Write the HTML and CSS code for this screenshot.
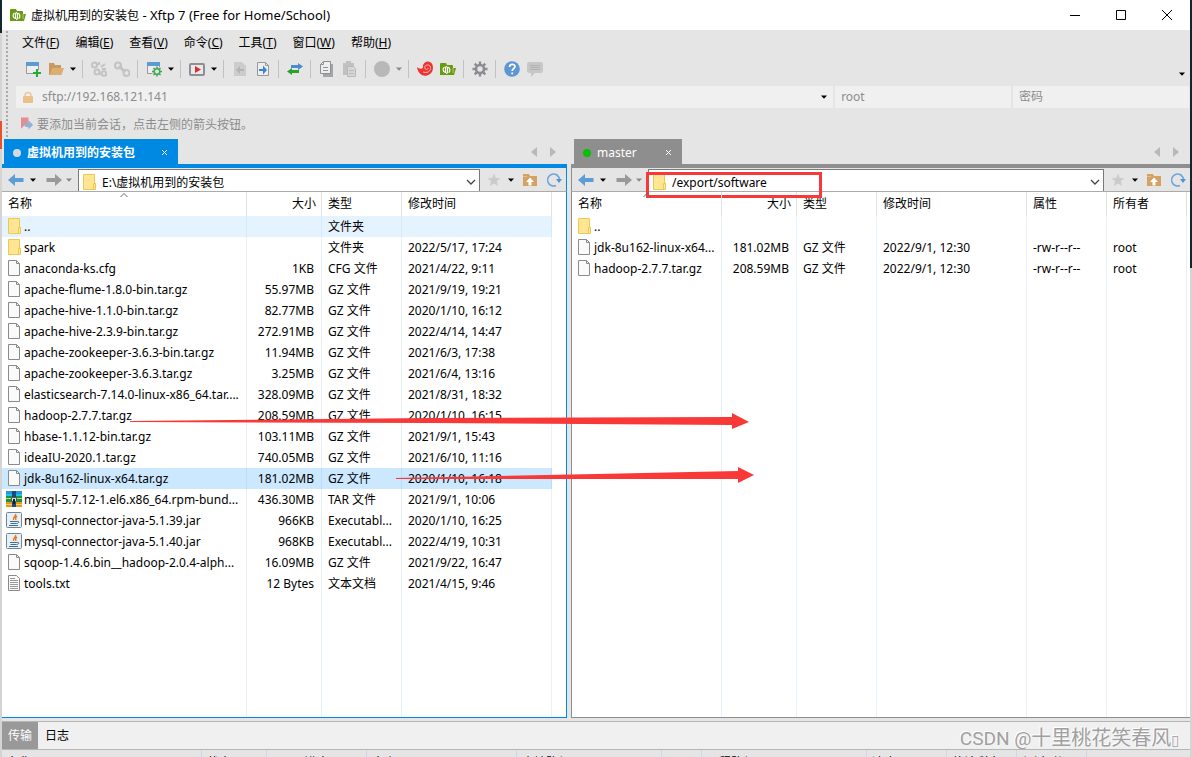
FILE: index.html
```html
<!DOCTYPE html>
<html lang="zh-CN">
<head>
  <meta charset="UTF-8" />
  <meta name="viewport" content="width=device-width, initial-scale=1.0" />
  <title>虚拟机用到的安装包 - Xftp 7 (Free for Home/School)</title>
  <link rel="stylesheet" href="styles.css">
</head>
<body>
  <!-- shared icons -->
  <svg class="sprite" aria-hidden="true">
    <symbol id="i-logo" viewBox="0 0 16 16">
      <path d="M0 3q0-1 1-1h5l1 2h5q1 0 1 1v2h3l-2 7H0z" fill="#6a9a12"/>
      <path d="M13 7v5" stroke="#e5e5e5" stroke-width=".6"/>
      <path d="M5.500 12V7.500q0-2 1.500-2M5.500 11.500C2.500 11 2.500 7 4.500 6M7.500 6v4.500q0 2-1.500 2M7.500 6c3 .5 3 4.500 1 5.500" fill="none" stroke="#fff" stroke-width="1.200"/>
    </symbol>
    <symbol id="i-dir" viewBox="0 0 14 18">
      <path d="M.5 1.500h11v9h1v6H.5z" fill="#ffe594" stroke="#ecc94f"/>
      <path d="M10.500 16v-5.500h2" fill="none" stroke="#ecc94f"/>
    </symbol>
    <symbol id="i-file" viewBox="0 0 14 18">
      <path d="M.5 1.500h8l3 3v12H.5z" fill="#fafafa" stroke="#8a8a8a"/>
      <path d="M8.500 1.500v3h3" fill="none" stroke="#8a8a8a"/>
    </symbol>
    <symbol id="i-txt" viewBox="0 0 14 18">
      <path d="M.5 1.500h8l3 3v12H.5z" fill="#fafafa" stroke="#8a8a8a"/>
      <path d="M2 4.500h5M2 6.500h8M2 8.500h8M2 10.500h8M2 12.500h8M2 14.500h8" stroke="#999"/>
    </symbol>
    <symbol id="i-rar" viewBox="0 0 16 16">
      <path d="M0 0h16v5H0z" fill="#2b93df"/><path d="M0 3h16v2H0z" fill="#1fc4e0"/>
      <path d="M0 5h16v6H0z" fill="#1f9147"/><path d="M0 7h16v1H0z" fill="#b8e35d"/>
      <path d="M0 11h16v5H0z" fill="#e09a20"/><path d="M0 13h16v1H0z" fill="#f6cf61"/>
      <path d="M6 0h4v16H6z" fill="#174d7e"/><path d="M5.500 6.500h5v4h-5z" fill="#ddd" stroke="#555"/><path d="M7 8h2v5H7z" fill="#123"/>
    </symbol>
    <symbol id="i-jar" viewBox="0 0 16 16">
      <rect x=".5" y=".5" width="15" height="15" rx="1" fill="#e9f0f5" stroke="#6e8798"/>
      <path d="M9.500 2c1 2-3 3-2 6M11 4c-2 1-2 2-1 4" fill="none" stroke="#e97623" stroke-width="1.400"/>
      <path d="M4 9.500h7M4.500 11.500h6M3 13.500h9M11 9.500c3-.5 2 2-.5 2" fill="none" stroke="#3f718f"/>
    </symbol>
    <symbol id="i-left" viewBox="0 0 16 14"><path d="M0 7l7-6v4h8.500v4H7v4z"/></symbol>
    <symbol id="i-right" viewBox="0 0 16 14"><path d="M16 7L9 1v4H.5v4H9v4z"/></symbol>
    <symbol id="i-tri" viewBox="0 0 6 4"><path d="M0 .5h6L3 3.800z"/></symbol>
    <symbol id="i-prev" viewBox="0 0 6 10"><path d="M6 0v10L0 5z"/></symbol>
    <symbol id="i-next" viewBox="0 0 6 10"><path d="M0 0v10l6-5z"/></symbol>
    <symbol id="i-x" viewBox="0 0 7 7"><path d="M1 1l5 5M6 1L1 6" fill="none" stroke="#fff"/></symbol>
    <symbol id="i-down" viewBox="0 0 10 6"><path d="M1 1l4 4 4-4" fill="none" stroke="#444" stroke-width="1.300"/></symbol>
    <symbol id="i-star" viewBox="0 0 14 14"><path d="M7 .5l1.800 4.500 4.700.3-3.600 3 1.200 4.700L7 10.500 2.900 13l1.200-4.700-3.600-3L5.200 5z" fill="#cbcbcb"/></symbol>
    <symbol id="i-up" viewBox="0 0 16 16">
      <path d="M1 2h6l1 2h7v10H1z" fill="#d5a265"/><path d="M1 4h4v1H1z" fill="#e7bd87"/>
      <path d="M8 5.500l4 4.500H9.500v3.500h-3V10H4z" fill="#fff"/>
    </symbol>
    <symbol id="i-refresh" viewBox="0 0 16 16">
      <path d="M10 13.500A6 6 0 1 1 13.500 7" fill="none" stroke="#6ba6da" stroke-width="1.600"/>
      <path d="M10 7h6l-3 4z" fill="#4f95d2"/>
    </symbol>
    <symbol id="i-gear" viewBox="0 0 16 16">
      <path d="M8 .5v15M.5 8h15M2.700 2.700l10.600 10.600M13.300 2.700L2.700 13.300" stroke="currentColor" stroke-width="2.400"/>
      <circle cx="8" cy="8" r="4" fill="#e5e5e5" stroke="currentColor" stroke-width="2.600"/>
    </symbol>
  </svg>

  <div class="window">
    <header class="titlebar">
      <svg class="logo"><use href="#i-logo"/></svg>
      <h1>虚拟机用到的安装包<span> - Xftp 7 (Free for Home/School)</span></h1>
      <div class="winbtns">
        <button aria-label="最小化"><svg viewBox="0 0 10 10"><path d="M0 5.500h10"/></svg></button>
        <button aria-label="最大化"><svg viewBox="0 0 10 10"><path d="M.5.5h9v9h-9z"/></svg></button>
        <button aria-label="关闭"><svg viewBox="0 0 10 10"><path d="M0 0l10 10M10 0L0 10"/></svg></button>
      </div>
    </header>

    <div class="bars">
      <nav class="menu">
        <button>文件(<u>F</u>)</button>
        <button>编辑(<u>E</u>)</button>
        <button>查看(<u>V</u>)</button>
        <button>命令(<u>C</u>)</button>
        <button>工具(<u>T</u>)</button>
        <button>窗口(<u>W</u>)</button>
        <button>帮助(<u>H</u>)</button>
      </nav>

      <div class="toolbar">
        <button class="tool" aria-label="新建"><svg viewBox="0 0 16 16"><path d="M1.500 2.500h12v10h-12z" fill="#eee" stroke="#999"/><path d="M1 1h13v4H1z" fill="#5b9bd5"/><path d="M8 9h8v7H8z" fill="#e5e5e5"/><path d="M12 8v8M8 12h8" stroke="#22ac38" stroke-width="2"/></svg></button>
        <button class="tool" aria-label="打开"><svg viewBox="0 0 16 16"><path d="M1 2h5l1 2h6v3H5l-3 7H1z" fill="#c99a5f"/><path d="M4.500 7H16l-2.500 7H1.500z" fill="#dcae72"/></svg></button>
        <button class="drop" aria-label="打开列表"><svg><use href="#i-tri"/></svg></button>
        <i class="sep"></i>
        <button class="tool" aria-label="断开"><svg viewBox="0 0 16 16" fill="none" stroke="#c3c3c3" stroke-width="2"><circle cx="3.500" cy="4" r="2.500"/><circle cx="6" cy="11" r="2.500"/><circle cx="13" cy="12.500" r="2.300"/><path d="M8 1v3M10 6l4-3M11 8h4M8 13l3-1"/></svg></button>
        <button class="tool" aria-label="重新连接"><svg viewBox="0 0 16 16" fill="none" stroke="#c3c3c3" stroke-width="2"><circle cx="4" cy="4.500" r="3"/><circle cx="12.500" cy="12" r="3"/><path d="M5 5l6 6" stroke-width="3"/></svg></button>
        <i class="sep"></i>
        <button class="tool" aria-label="会话属性"><svg viewBox="0 0 16 16"><path d="M1.500 2.500h12v10h-12z" fill="#eee" stroke="#999"/><path d="M1 1h13v4H1z" fill="#5b9bd5"/><circle cx="11" cy="10.500" r="5" fill="#e5e5e5"/><g stroke="#43a854" stroke-width="1.600"><path d="M11 5.500v10M6 10.500h10M7.500 7l7 7M14.500 7l-7 7"/><circle cx="11" cy="10.500" r="2.800" fill="#e5e5e5"/></g></svg></button>
        <button class="drop" aria-label="属性列表"><svg><use href="#i-tri"/></svg></button>
        <i class="sep"></i>
        <button class="tool" aria-label="运行"><svg viewBox="0 0 16 16"><rect x="1" y="3" width="14" height="11" rx="1" fill="#e9e9e9" stroke="#8c8f96" stroke-width="2"/><path d="M6 5l6 3.500L6 12z" fill="#dd2c2c"/></svg></button>
        <button class="drop" aria-label="运行列表"><svg><use href="#i-tri"/></svg></button>
        <i class="sep"></i>
        <button class="tool" aria-label="传入"><svg viewBox="0 0 16 16"><path d="M2 1h8l4 4v10H2z" fill="#ccc"/><path d="M4 9l4-4v3h4v2H8v3z" fill="#b4b4b4"/></svg></button>
        <button class="tool" aria-label="传出"><svg viewBox="0 0 16 16"><path d="M2.500 1.500h8l3 3v10h-11z" fill="#eee" stroke="#999"/><path d="M10.500 1.500v3h3" fill="none" stroke="#999"/><path d="M12 9L8 4.500V8H4v2h4v3.500z" fill="#3d83cf"/></svg></button>
        <i class="sep"></i>
        <button class="tool" aria-label="同步"><svg viewBox="0 0 16 16"><path d="M4 4h7V2l5 3.500L11 9V7H4z" fill="#4c8bcf"/><path d="M12 9H5V7L0 10.500 5 14v-2h7z" fill="#27a22d"/></svg></button>
        <i class="sep"></i>
        <button class="tool" aria-label="复制"><svg viewBox="0 0 16 16"><path d="M4 3h10v13H4z" fill="#a2a5aa"/><path d="M4.500.5h7v12h-10v-9z" fill="#eee" stroke="#8c8f94"/><path d="M1.500 3.500h3v-3M4 6.500h5M4 9.500h5" fill="none" stroke="#909397"/></svg></button>
        <button class="tool" aria-label="粘贴"><svg viewBox="0 0 16 16"><path d="M1 2h11v12H1zM4 0h5v3H4z" fill="#c1c1c1"/><path d="M5.500 5.500h6l2 2v8h-8z" fill="#d6d6d6" stroke="#b9b9b9"/><path d="M7 9.500h5M7 12.500h5" stroke="#b9b9b9"/></svg></button>
        <i class="sep"></i>
        <button class="tool" aria-label="停止"><svg viewBox="0 0 16 16"><circle cx="8" cy="8" r="8" fill="#b8b8b8"/></svg></button>
        <button class="drop dim" aria-label="停止列表"><svg><use href="#i-tri"/></svg></button>
        <i class="sep"></i>
        <button class="tool" aria-label="Xshell"><svg viewBox="0 0 16 16"><path d="M0 6c2 2 4 2 6 1C5 3 9-1 13 1c4 2 4 9 0 12-5 4-12 1-13-7z" fill="#ee3430"/><path d="M6 11c6 2 9-3 7-6-2-2-6-1-5 2 0 2 3 2 3 0" fill="none" stroke="#f6bcb9"/></svg></button>
        <button class="tool" aria-label="Xftp"><svg><use href="#i-logo"/></svg></button>
        <i class="sep"></i>
        <button class="tool gear" aria-label="选项"><svg><use href="#i-gear"/></svg></button>
        <i class="sep"></i>
        <button class="tool" aria-label="帮助"><svg viewBox="0 0 16 16"><circle cx="8" cy="8" r="7.800" fill="#5c97d3"/><path d="M5.500 6c0-3.500 5.500-3.500 5.500-.5C11 7.500 8.200 7.500 8.200 10M8.200 11.500v1.700" fill="none" stroke="#fff" stroke-width="1.700"/></svg></button>
        <button class="tool" aria-label="反馈"><svg viewBox="0 0 16 16"><path d="M2 1h12q2 0 2 2v7q0 2-2 2H8l-4 4v-4H2q-2 0-2-2V3q0-2 2-2z" fill="#c7c7c7"/><path d="M3 4.500h10M3 6.500h10M3 8.500h10" stroke="#b2b2b2"/></svg></button>
        <button class="drop last" aria-label="更多"><svg><use href="#i-tri"/></svg></button>
      </div>

      <form class="address">
        <div class="field host">
          <svg viewBox="0 0 10 11"><path d="M2 5V3.500q0-3 3-3t3 3V5" fill="none" stroke="#ecc999" stroke-width="1.600"/><rect y="4" width="10" height="7" rx="1" fill="#ebc18a"/></svg>
          <input type="text" aria-label="主机" value="sftp://192.168.121.141">
          <button type="button" class="drop" aria-label="主机列表"><svg><use href="#i-tri"/></svg></button>
        </div>
        <div class="field user"><input type="text" aria-label="用户名" placeholder="root"></div>
        <div class="field pass"><input type="password" aria-label="密码" placeholder="密码"></div>
      </form>

      <div class="session">
        <svg viewBox="0 0 14 14"><path d="M0 0h8v11L4 8l-4 4z" fill="#e58d91"/><path d="M13 8L8 3v3H4v4h4v3z" fill="#90b2da"/></svg>
        <span>要添加当前会话，点击左侧的箭头按钮。</span>
      </div>
    </div>

    <main class="panes">
      <section class="pane local">
        <div class="tabs">
          <div class="tab"><i class="dot"></i><span>虚拟机用到的安装包</span><button aria-label="关闭标签"><svg><use href="#i-x"/></svg></button></div>
          <div class="tabnav"><svg><use href="#i-prev"/></svg><svg><use href="#i-next"/></svg></div>
        </div>
        <div class="pathbar">
          <div class="history">
            <button class="nav" aria-label="后退"><svg><use href="#i-left"/></svg></button>
            <button class="drop" aria-label="后退列表"><svg><use href="#i-tri"/></svg></button>
            <button class="nav off" aria-label="前进"><svg><use href="#i-right"/></svg></button>
            <button class="drop dim" aria-label="前进列表"><svg><use href="#i-tri"/></svg></button>
          </div>
          <div class="path">
            <svg class="ficon"><use href="#i-dir"/></svg>
            <input type="text" aria-label="本地路径" value="E:\虚拟机用到的安装包">
            <button aria-label="展开路径"><svg><use href="#i-down"/></svg></button>
          </div>
          <div class="extras">
            <button class="star" aria-label="收藏"><svg><use href="#i-star"/></svg></button>
            <button class="drop" aria-label="收藏列表"><svg><use href="#i-tri"/></svg></button>
            <button aria-label="上级目录"><svg><use href="#i-up"/></svg></button>
            <button aria-label="刷新"><svg><use href="#i-refresh"/></svg></button>
          </div>
        </div>
        <div class="list">
          <table>
            <colgroup><col class="c-name"><col class="c-size"><col class="c-type"><col class="c-date"></colgroup>
            <thead>
              <tr><th class="sorted">名称<svg viewBox="0 0 8 4"><path d="M.5 4L4 .5 7.500 4" fill="none" stroke="#666"/></svg></th><th class="num">大小</th><th>类型</th><th>修改时间</th></tr>
            </thead>
            <tbody>
              <tr class="hover"><td><svg class="ficon"><use href="#i-dir"/></svg>..</td><td class="num"></td><td>文件夹</td><td></td></tr>
              <tr><td><svg class="ficon"><use href="#i-dir"/></svg>spark</td><td class="num"></td><td>文件夹</td><td>2022/5/17, 17:24</td></tr>
              <tr><td><svg class="ficon"><use href="#i-file"/></svg>anaconda-ks.cfg</td><td class="num">1KB</td><td>CFG 文件</td><td>2021/4/22, 9:11</td></tr>
              <tr><td><svg class="ficon"><use href="#i-file"/></svg>apache-flume-1.8.0-bin.tar.gz</td><td class="num">55.97MB</td><td>GZ 文件</td><td>2021/9/19, 19:21</td></tr>
              <tr><td><svg class="ficon"><use href="#i-file"/></svg>apache-hive-1.1.0-bin.tar.gz</td><td class="num">82.77MB</td><td>GZ 文件</td><td>2020/1/10, 16:12</td></tr>
              <tr><td><svg class="ficon"><use href="#i-file"/></svg>apache-hive-2.3.9-bin.tar.gz</td><td class="num">272.91MB</td><td>GZ 文件</td><td>2022/4/14, 14:47</td></tr>
              <tr><td><svg class="ficon"><use href="#i-file"/></svg>apache-zookeeper-3.6.3-bin.tar.gz</td><td class="num">11.94MB</td><td>GZ 文件</td><td>2021/6/3, 17:38</td></tr>
              <tr><td><svg class="ficon"><use href="#i-file"/></svg>apache-zookeeper-3.6.3.tar.gz</td><td class="num">3.25MB</td><td>GZ 文件</td><td>2021/6/4, 13:16</td></tr>
              <tr><td><svg class="ficon"><use href="#i-file"/></svg>elasticsearch-7.14.0-linux-x86_64.tar....</td><td class="num">328.09MB</td><td>GZ 文件</td><td>2021/8/31, 18:32</td></tr>
              <tr><td><svg class="ficon"><use href="#i-file"/></svg>hadoop-2.7.7.tar.gz</td><td class="num">208.59MB</td><td>GZ 文件</td><td>2020/1/10, 16:15</td></tr>
              <tr><td><svg class="ficon"><use href="#i-file"/></svg>hbase-1.1.12-bin.tar.gz</td><td class="num">103.11MB</td><td>GZ 文件</td><td>2021/9/1, 15:43</td></tr>
              <tr><td><svg class="ficon"><use href="#i-file"/></svg>ideaIU-2020.1.tar.gz</td><td class="num">740.05MB</td><td>GZ 文件</td><td>2021/6/10, 11:16</td></tr>
              <tr class="selected"><td><svg class="ficon"><use href="#i-file"/></svg>jdk-8u162-linux-x64.tar.gz</td><td class="num">181.02MB</td><td>GZ 文件</td><td>2020/1/10, 16:18</td></tr>
              <tr><td><svg class="ficon wide"><use href="#i-rar"/></svg>mysql-5.7.12-1.el6.x86_64.rpm-bund...</td><td class="num">436.30MB</td><td>TAR 文件</td><td>2021/9/1, 10:06</td></tr>
              <tr><td><svg class="ficon wide"><use href="#i-jar"/></svg>mysql-connector-java-5.1.39.jar</td><td class="num">966KB</td><td>Executabl...</td><td>2020/1/10, 16:25</td></tr>
              <tr><td><svg class="ficon wide"><use href="#i-jar"/></svg>mysql-connector-java-5.1.40.jar</td><td class="num">968KB</td><td>Executabl...</td><td>2022/4/19, 10:31</td></tr>
              <tr><td><svg class="ficon"><use href="#i-file"/></svg>sqoop-1.4.6.bin__hadoop-2.0.4-alph...</td><td class="num">16.09MB</td><td>GZ 文件</td><td>2021/9/22, 16:47</td></tr>
              <tr><td><svg class="ficon"><use href="#i-txt"/></svg>tools.txt</td><td class="num">12 Bytes</td><td>文本文档</td><td>2021/4/15, 9:46</td></tr>
              <tr class="rest"><td></td><td></td><td></td><td></td></tr>
            </tbody>
          </table>
        </div>
      </section>

      <section class="pane remote">
        <div class="tabs">
          <div class="tab"><i class="dot"></i><span>master</span><button aria-label="关闭标签"><svg><use href="#i-x"/></svg></button></div>
          <div class="tabnav"><svg><use href="#i-prev"/></svg><svg><use href="#i-next"/></svg></div>
        </div>
        <div class="pathbar">
          <div class="history">
            <button class="nav" aria-label="后退"><svg><use href="#i-left"/></svg></button>
            <button class="drop" aria-label="后退列表"><svg><use href="#i-tri"/></svg></button>
            <button class="nav off" aria-label="前进"><svg><use href="#i-right"/></svg></button>
            <button class="drop dim" aria-label="前进列表"><svg><use href="#i-tri"/></svg></button>
          </div>
          <div class="path">
            <svg class="ficon"><use href="#i-dir"/></svg>
            <input type="text" aria-label="远程路径" value="/export/software">
            <button aria-label="展开路径"><svg><use href="#i-down"/></svg></button>
            <div class="mark-box"></div>
          </div>
          <div class="extras">
            <button class="star" aria-label="收藏"><svg><use href="#i-star"/></svg></button>
            <button class="drop" aria-label="收藏列表"><svg><use href="#i-tri"/></svg></button>
            <button aria-label="上级目录"><svg><use href="#i-up"/></svg></button>
            <button aria-label="刷新"><svg><use href="#i-refresh"/></svg></button>
          </div>
        </div>
        <div class="list">
          <table>
            <colgroup><col class="c-rname"><col class="c-size"><col class="c-type"><col class="c-date"><col class="c-type"><col class="c-type"></colgroup>
            <thead>
              <tr><th class="sorted">名称<svg viewBox="0 0 8 4"><path d="M.5 4L4 .5 7.500 4" fill="none" stroke="#666"/></svg></th><th class="num">大小</th><th>类型</th><th>修改时间</th><th>属性</th><th>所有者</th></tr>
            </thead>
            <tbody>
              <tr><td><svg class="ficon"><use href="#i-dir"/></svg>..</td><td class="num"></td><td></td><td></td><td></td><td></td></tr>
              <tr><td><svg class="ficon"><use href="#i-file"/></svg>jdk-8u162-linux-x64...</td><td class="num">181.02MB</td><td>GZ 文件</td><td>2022/9/1, 12:30</td><td>-rw-r--r--</td><td>root</td></tr>
              <tr><td><svg class="ficon"><use href="#i-file"/></svg>hadoop-2.7.7.tar.gz</td><td class="num">208.59MB</td><td>GZ 文件</td><td>2022/9/1, 12:30</td><td>-rw-r--r--</td><td>root</td></tr>
              <tr class="rest"><td></td><td></td><td></td><td></td><td></td><td></td></tr>
            </tbody>
          </table>
        </div>
      </section>

      <!-- drag arrows from local to remote -->
      <svg class="arrows" viewBox="0 0 640 80" aria-hidden="true">
        <path d="M0 10L300 7l302-1V2l17 9-17 7v-4L300 12 0 11zM266 67l200-4 142-3v-4l16 8-16 8v-4l-142 0-200 0z"/>
      </svg>
    </main>

    <footer class="bottom">
      <div class="logtabs">
        <button class="on">传输</button>
        <button>日志</button>
        <div class="watermark"><span>CSDN @</span>十里桃花笑春风<small>▯</small></div>
      </div>
      <div class="queue">
        <span class="q-name">名称</span><span class="q-state">状态</span><span class="q-prog">进度</span><span class="q-size">大小</span><span class="q-local">本地路径</span><span class="q-dir">&lt;-&gt;</span><span class="q-remote">远程路径</span><span class="q-speed">速度</span><span class="q-time">估计剩余</span><span class="q-time">经过时间</span>
      </div>
    </footer>
  </div>
</body>
</html>
```
FILE: styles.css
```css
* {
  box-sizing: border-box;
}
:root {
  --bar: #e5e5e5;
  --blue: #0089e3;
  --gray: #8e8e8e;
  --mark: #f93937;
}
body {
  margin: 0;
  height: 100vh;
  overflow: hidden;
  padding: 0 2px;
  font: 12px/16px "Noto Sans", "Noto Sans CJK SC", sans-serif;
  color: #000;
  background:
    linear-gradient(#12262b 268px, #d4d4d4 268px) right / 2px 100% no-repeat,
    linear-gradient(#16262e 33px, #d4d4d4 33px 121px, #e8502e 121px 149px, #d4d4d4 149px) left / 2px 100% no-repeat;
}
button {
  display: flex;
  align-items: center;
  justify-content: center;
  border: 0;
  padding: 0;
  background: none;
  font: inherit;
  color: inherit;
}
input {
  flex: 1;
  min-width: 0;
  border: 0;
  padding: 0;
  background: none;
  font: inherit;
  color: inherit;
  outline: none;
}
svg {
  display: block;
  flex: none;
}
.sprite {
  position: absolute;
  width: 0;
  height: 0;
}
.window {
  display: flex;
  flex-direction: column;
  height: 100%;
  background: var(--bar);
}

/* title */
.titlebar {
  display: flex;
  align-items: center;
  height: 30px;
  padding-left: 8px;
  background: #fff;
}
.logo {
  width: 16px;
  height: 16px;
}
.titlebar h1 {
  flex: 1;
  margin: 0 0 0 5px;
  font-size: 12px;
  font-weight: normal;
}
.titlebar h1 span {
  font-size: 13px;
}
.winbtns {
  display: flex;
}
.winbtns button {
  width: 46px;
  height: 28px;
}
.winbtns svg {
  width: 10px;
  height: 10px;
  fill: none;
  stroke: #000;
}

/* menu + toolbar */
.bars {
  height: 109px;
  padding-left: 14px;
  background: radial-gradient(circle, #aaa 1px, transparent 1px) 3px 0 / 4px 4px repeat-y;
}
.menu {
  display: flex;
  gap: 16px;
  padding: 5px 6px;
}
.menu u {
  text-underline-offset: 1px;
}
.toolbar {
  display: flex;
  align-items: center;
  height: 26px;
  padding: 0 3px 0 5px;
}
.tool {
  width: 23px;
}
.tool svg {
  width: 16px;
  height: 16px;
}
.gear {
  color: #8b8d92;
}
.drop {
  width: 11px;
}
.drop svg {
  width: 6px;
  height: 4px;
}
.dim svg {
  fill: #888;
}
.last {
  margin-left: auto;
  padding-top: 10px;
}
.sep {
  width: 1px;
  height: 18px;
  margin: 0 4px;
  background: #c2c2c2;
}
.address {
  display: flex;
  gap: 2px;
  margin-top: 4px;
  padding-right: 1px;
  color: #8c8c8c;
}
.field {
  display: flex;
  align-items: center;
  height: 22px;
  padding: 0 6px;
  background: #f0f0f0;
}
.field input::placeholder {
  color: #8c8c8c;
  opacity: 1;
}
.host {
  flex: 1;
  gap: 9px;
  padding-right: 4px;
}
.host > svg {
  width: 10px;
  height: 11px;
  margin-left: 1px;
}
.user,
.pass {
  width: 15%;
}
.session {
  display: flex;
  gap: 3px;
  padding: 9px 5px 0;
  color: #8c8c8c;
}
.session svg {
  width: 13px;
  height: 14px;
}

/* panes */
.panes {
  position: relative;
  display: flex;
  flex: 1;
  gap: 4px;
  min-height: 0;
}
.pane {
  display: flex;
  flex-direction: column;
  min-width: 0;
}
.local {
  flex: 565 1 0;
  --pane: var(--blue);
}
.remote {
  flex: 619 1 0;
  --pane: var(--gray);
}
.tabs {
  display: flex;
  align-items: center;
  justify-content: space-between;
  height: 29px;
  padding: 0 11px 0 2px;
  border-bottom: 4px solid var(--pane);
}
.remote .tabs {
  padding-left: 3px;
}
.tab {
  display: flex;
  align-items: center;
  height: 26px;
  padding: 2px 10px 0 9px;
  background: var(--pane);
  color: #fff;
}
.local .tab {
  font-weight: bold;
}
.dot {
  width: 8px;
  height: 8px;
  margin-right: 6px;
  border-radius: 50%;
  background: #d5dade;
}
.remote .dot {
  background: #06c006;
}
.tab button {
  margin-left: 26px;
}
.remote .tab button {
  margin-left: 28px;
}
.tab button svg {
  width: 7px;
  height: 7px;
}
.tabnav {
  display: flex;
  gap: 13px;
}
.tabnav svg {
  width: 6px;
  height: 10px;
  fill: #b8b8b8;
}
.pathbar {
  display: flex;
  height: 24px;
  border-bottom: 1px solid #ababab;
  border-right: 1px solid var(--pane);
}
.remote .pathbar {
  border-right: 0;
  border-left: 1px solid var(--pane);
}
.history {
  display: flex;
  align-items: center;
  width: 76px;
  padding-left: 6px;
}
.nav svg {
  width: 16px;
  height: 14px;
  fill: #5d9dd5;
}
.off svg {
  fill: #999;
}
.history .drop {
  width: 18px;
  margin-right: 4px;
}
.history .drop:last-child {
  width: 14px;
  margin-right: 0;
}
.path {
  position: relative;
  display: flex;
  flex: 1;
  align-items: center;
  min-width: 0;
  margin-top: 1px;
  padding: 3px 3px 0 4px;
  border: 1px solid #7a7a7a;
  border-bottom: 0;
  background: #fff;
}
.path input {
  padding-top: 2px;
}
.path .ficon {
  margin-right: 5px;
}
.path button svg {
  width: 10px;
  height: 6px;
}
.extras {
  display: flex;
  align-items: center;
  width: 86px;
  padding-left: 7px;
}
.extras button svg {
  width: 16px;
  height: 16px;
}
.extras .star svg {
  width: 14px;
  height: 14px;
}
.extras .drop {
  width: 20px;
  margin-right: 1px;
}
.extras .drop svg {
  width: 6px;
  height: 4px;
}
.extras button:last-child {
  margin-left: 8px;
}

/* file lists */
.list {
  flex: 1;
  min-height: 0;
  overflow: hidden;
  background: #fff;
  border-right: 1px solid var(--pane);
  border-bottom: 1px solid var(--pane);
}
.remote .list {
  border-right: 0;
  border-left: 1px solid var(--pane);
}
table {
  table-layout: fixed;
  width: 0;
  height: 100%;
  border-spacing: 0;
}
.c-name {
  width: 245px;
}
.c-rname {
  width: 150px;
}
.c-size {
  width: 75px;
}
.c-type {
  width: 80px;
}
.c-date {
  width: 150px;
}
th {
  height: 24px;
  padding: 0 5px 0 6px;
  border-right: 1px solid #e2e2e2;
  font-weight: normal;
  text-align: left;
}
.sorted {
  position: relative;
}
.sorted svg {
  position: absolute;
  top: 1px;
  left: calc(50% - 4px);
  width: 8px;
  height: 4px;
}
td {
  height: 21px;
  padding: 0 0 0 6px;
  border-right: 1px solid #e8f0fa;
  line-height: 21px;
  white-space: nowrap;
  overflow: hidden;
}
.num {
  text-align: right;
}
td.num {
  padding-right: 7px;
}
.rest td {
  height: auto;
}
.hover td {
  background: #e5f3ff;
  border-color: #d4e9fb;
}
.selected td {
  background: #cce8ff;
  border-color: #bcdcf6;
}
.ficon {
  width: 14px;
  height: 18px;
}
td .ficon {
  display: inline-block;
  margin: 1px 2px 0 0;
  vertical-align: top;
}
td .wide {
  width: 16px;
  height: 16px;
  margin: 2px 2px 0 -2px;
}

/* annotations */
.mark-box {
  position: absolute;
  top: 2px;
  left: -3px;
  width: 176px;
  height: 26px;
  border: 3px solid var(--mark);
}
.arrows {
  position: absolute;
  top: 272px;
  left: 128px;
  width: 640px;
  height: 80px;
  fill: var(--mark);
}

/* transfer queue */
.bottom {
  flex: 0 0 36px;
  margin-top: 3px;
  overflow: hidden;
  border-top: 1px solid #b5b5b5;
}
.logtabs {
  position: relative;
  display: flex;
  height: 28px;
  background: #f0f0f0;
  border-bottom: 1px solid #b5b5b5;
}
.logtabs button {
  width: 38px;
}
.logtabs .on {
  width: 36px;
  background: #999;
  color: #fff;
}
.watermark {
  position: absolute;
  right: 11px;
  top: 3px;
  font: 20px/26px Roboto, "Noto Sans CJK SC", sans-serif;
  color: #a0a0a0;
  text-shadow: -1px -1px #fff;
}
.watermark span {
  font-size: 19px;
}
.watermark small {
  font: 14px "DejaVu Sans", sans-serif;
}
.queue {
  display: flex;
}
.queue span {
  flex: none;
  padding: 5px 5px 0;
  border-right: 1px solid #cfd7e6;
}
.q-name {
  width: 200px;
}
.q-state {
  width: 65px;
}
.q-prog {
  width: 100px;
  text-align: center;
}
.q-size {
  width: 150px;
}
.q-local {
  width: 145px;
}
.q-dir {
  width: 40px;
}
.q-remote {
  width: 165px;
}
.q-speed {
  width: 80px;
}
.q-time {
  width: 70px;
}
```
